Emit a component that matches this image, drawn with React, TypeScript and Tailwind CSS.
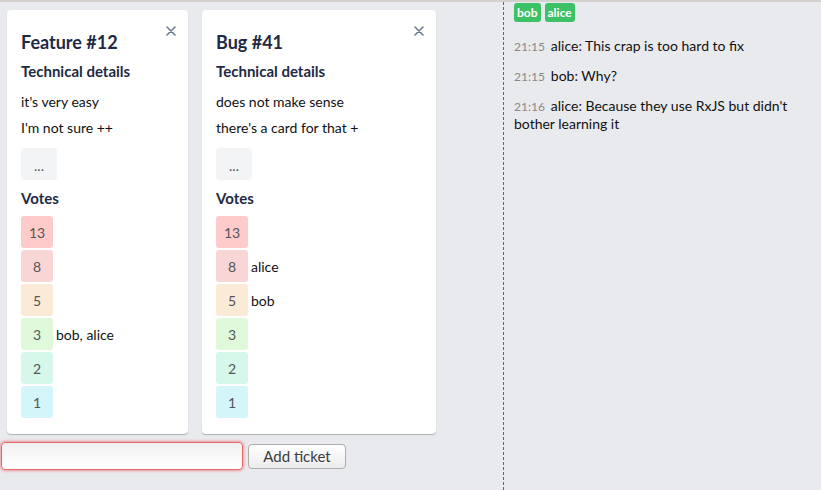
import React from "react";

const voteColors = ["bg-[#fecaca]", "bg-[#f9d6d6]", "bg-[#fbead6]", "bg-[#e0f9da]", "bg-[#d6f8eb]", "bg-[#d4f5f9]"];
const values = ["13", "8", "5", "3", "2", "1"];

function Card({ title, lines, width, names }: { title: string; lines: string[]; width: string; names: Record<string, string> }) {
  return (
    <div className={`relative bg-white rounded-[4px] shadow-[0_1px_1px_rgba(0,0,0,0.25)] pt-[18px] px-[14px] pb-[16px] ${width}`}>
      <svg className="absolute right-[12px] top-[16px]" width="10" height="10" viewBox="0 0 10 10">
        <path d="M1 1 L9 9 M9 1 L1 9" stroke="#6b7a90" strokeWidth="1.6" strokeLinecap="round" />
      </svg>
      <div className="text-[18px] leading-[28px] font-bold text-[#1e2a44]">{title}</div>
      <div className="mt-[5px] text-[15px] leading-[20px] font-bold text-[#1e2a44]">Technical details</div>
      <div className="mt-[11px] text-[14px] leading-[20px] text-[#111]">{lines[0]}</div>
      <div className="mt-[6px] text-[14px] leading-[20px] text-[#111]">{lines[1]}</div>
      <div className="mt-[10px] w-[36px] h-[32px] rounded-[4px] bg-[#f3f4f6] flex items-center justify-center pt-[3px] text-[14px] text-[#555]">...</div>
      <div className="mt-[8px] text-[15px] leading-[20px] font-bold text-[#1e2a44]">Votes</div>
      <div className="mt-[8px] flex flex-col gap-[2px]">
        {values.map((v, i) => (
          <div key={v} className="flex items-center gap-[3px]">
            <div className={`w-[32px] h-[32px] rounded-[3px] ${voteColors[i]} flex items-center justify-center text-[14px] text-[#555]`}>{v}</div>
            {names[v] && <span className="text-[14px] text-[#111]">{names[v]}</span>}
          </div>
        ))}
      </div>
    </div>
  );
}

export default function App() {
  return (
    <div
      className="w-[821px] h-[490px] bg-[#e9eaee] border-t-2 border-[#d4d2ce] flex overflow-hidden"
      style={{ fontFamily: "Lato, 'Noto Sans', sans-serif" }}
    >
      <div className="w-[503px] flex flex-col">
        <div className="flex gap-[14px] pl-[7px] pt-[8px]">
          <Card title="Feature #12" lines={["it's very easy", "I'm not sure ++"]} width="w-[181px]" names={{ "3": "bob, alice" }} />
          <Card title="Bug #41" lines={["does not make sense", "there's a card for that +"]} width="w-[234px]" names={{ "8": "alice", "5": "bob" }} />
        </div>
        <div className="flex items-center gap-[5px] pl-[1px] mt-[8px]">
          <input
            className="w-[242px] h-[28px] rounded-[4px] border border-[#e06a6a] shadow-[0_0_3px_1px_rgba(240,100,100,0.6)] bg-linear-to-b from-[#f1f1f1] to-white outline-none"
          />
          <button className="w-[98px] h-[25px] rounded-[4px] border border-[#adadad] bg-linear-to-b from-white to-[#ececec] text-[15px] text-[#3c3c3c]">
            Add ticket
          </button>
        </div>
      </div>
      <div className="flex-1 border-l border-dashed border-[#666] pl-[10px] pr-[10px]">
        <div className="flex gap-[4px] mt-[1px]">
          <span className="bg-[#3dc166] text-white text-[12px] font-bold rounded-[3px] px-[3px] h-[19px] leading-[19px]">bob</span>
          <span className="bg-[#3dc166] text-white text-[12px] font-bold rounded-[3px] px-[3px] h-[19px] leading-[19px]">alice</span>
        </div>
        <div className="mt-[15px] text-[14px] leading-[17px] text-[#111]">
          <span className="text-[12px] text-[#888] mr-[6px]">21:15</span>alice: This crap is too hard to fix
        </div>
        <div className="mt-[12px] text-[14px] leading-[17px] text-[#111]">
          <span className="text-[12px] text-[#888] mr-[6px]">21:15</span>bob: Why?
        </div>
        <div className="mt-[12px] text-[14px] leading-[17px] text-[#111]">
          <span className="text-[12px] text-[#888] mr-[6px]">21:16</span>alice: Because they use RxJS but didn't bother learning it
        </div>
      </div>
    </div>
  );
}
